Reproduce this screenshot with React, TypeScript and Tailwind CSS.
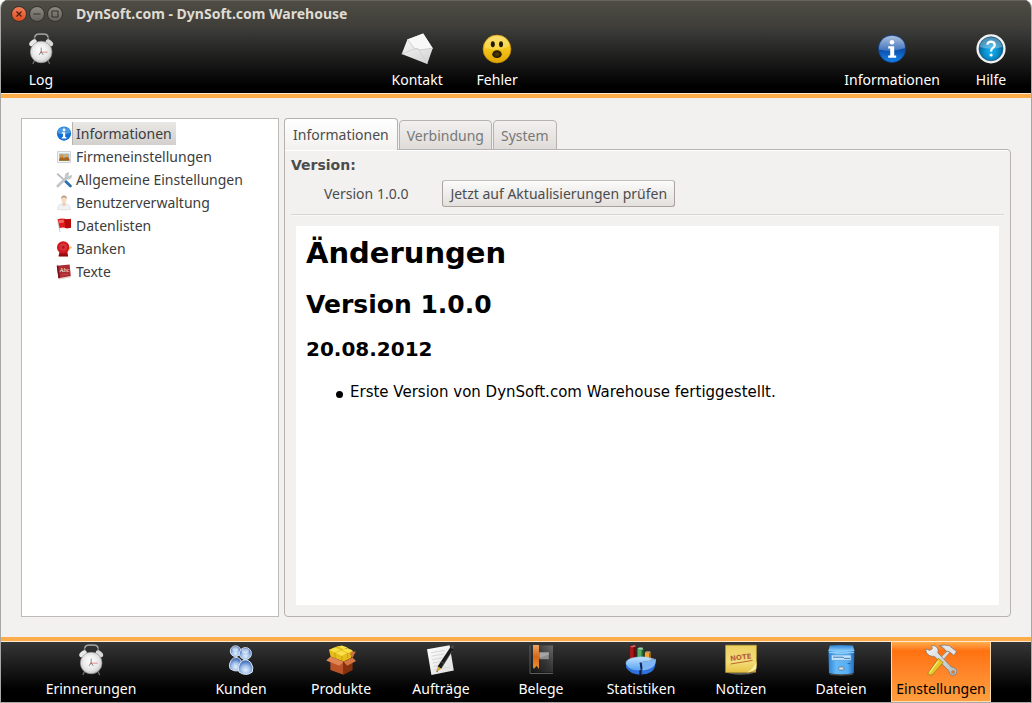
import { useState } from "react";
import type { ReactNode } from "react";

/* ---------- large icons (32 x 32) ---------- */

function Icon32({ children }: { children: ReactNode }) {
  return (
    <svg viewBox="0 0 32 32" className="size-8 shrink-0" aria-hidden="true">
      {children}
    </svg>
  );
}

function ClockIcon() {
  return (
    <Icon32>
      <defs>
        <radialGradient id="clock-face" cx="45%" cy="40%" r="65%">
          <stop offset="0" stopColor="#ffffff" />
          <stop offset="0.7" stopColor="#e4e4e4" />
          <stop offset="1" stopColor="#b4b4b4" />
        </radialGradient>
      </defs>
      <path d="M9.6 7.6V4.2Q9.8 1.4 13 1.2H20Q23 1.4 23.2 4.2V7.6" fill="none" stroke="#7c7c7c" strokeWidth="1.5" />
      <path d="M10 4Q10.4 1.2 13.2 1H19.8Q22.4 1.2 22.8 4" fill="none" stroke="#c6c6c6" strokeWidth="0.7" />
      <path d="M9.5 27.6 7.8 31M23 27.6l1.7 3.4" stroke="#7a7a7a" strokeWidth="1.1" />
      <ellipse cx="8" cy="9.8" rx="4.2" ry="2.7" transform="rotate(-38 8 9.8)" fill="#e9e9e9" />
      <ellipse cx="24.4" cy="9.8" rx="4.2" ry="2.7" transform="rotate(38 24.4 9.8)" fill="#d8d8d8" />
      <circle cx="16.2" cy="19" r="10.8" fill="url(#clock-face)" stroke="#8f8f8f" strokeWidth="0.7" />
      <circle cx="16.2" cy="19" r="9" fill="none" stroke="#d4d4d4" strokeWidth="0.5" />
      <path d="M16.2 20.2V14.6M16.4 19l1.8 2.8M16 19l-1.8 2.8" stroke="#6a6a6a" strokeWidth="0.8" />
      <path d="M15 19.2h7.6" stroke="#d87878" strokeWidth="0.8" />
      <circle cx="16.2" cy="19.2" r="0.8" fill="#b86060" />
    </Icon32>
  );
}

function EnvelopeIcon() {
  return (
    <Icon32>
      <defs>
        <linearGradient id="envelope" x1="0" y1="0" x2="0.4" y2="1">
          <stop offset="0" stopColor="#ffffff" />
          <stop offset="1" stopColor="#d8d8d8" />
        </linearGradient>
      </defs>
      <path d="M6.4 6.4 22.2.6 31.7 15.2 26.2 31 .7 21Z" fill="url(#envelope)" />
      <path d="M6.4 6.4 22.2.6 31.7 15.2 18 16.4Q16 15 13.6 15.6Z" fill="#f8f8f8" />
      <path d="M6.4 6.4 13.6 15.6Q16 14.2 18.4 17L31.7 15.2" fill="none" stroke="#c6c6c6" strokeWidth="0.8" />
      <path d="M.7 21 13.4 16Q16.6 14.6 18.6 18.2L26.2 31" fill="none" stroke="#cecece" strokeWidth="0.8" />
    </Icon32>
  );
}

function SmileyIcon() {
  return (
    <Icon32>
      <defs>
        <linearGradient id="smiley" x1="0" y1="0" x2="0" y2="1">
          <stop offset="0" stopColor="#f9d964" />
          <stop offset="0.45" stopColor="#f6c81c" />
          <stop offset="1" stopColor="#e0a500" />
        </linearGradient>
        <radialGradient id="smiley-mouth">
          <stop offset="0" stopColor="#5e4200" />
          <stop offset="1" stopColor="#1a1200" />
        </radialGradient>
      </defs>
      <circle cx="16" cy="16" r="13.9" fill="url(#smiley)" stroke="#d89a00" strokeWidth="0.7" />
      <path d="M3.6 15Q3.6 3.6 16 3.2 28.4 3.6 28.4 13.4 16 18.4 3.6 15Z" fill="#ffee9a" opacity="0.35" />
      <ellipse cx="11.8" cy="11.2" rx="2" ry="3" fill="#241900" />
      <ellipse cx="20" cy="11.2" rx="2" ry="3" fill="#241900" />
      <ellipse cx="16" cy="21.2" rx="4.7" ry="3.9" fill="url(#smiley-mouth)" />
    </Icon32>
  );
}

function InfoIcon() {
  return (
    <Icon32>
      <defs>
        <linearGradient id="info" x1="0" y1="0" x2="0" y2="1">
          <stop offset="0" stopColor="#2d62ae" />
          <stop offset="0.55" stopColor="#0c4fac" />
          <stop offset="1" stopColor="#1583ee" />
        </linearGradient>
        <linearGradient id="info-shine" x1="0" y1="0" x2="0" y2="1">
          <stop offset="0" stopColor="#ffffff" stopOpacity="0.6" />
          <stop offset="1" stopColor="#ffffff" stopOpacity="0.2" />
        </linearGradient>
      </defs>
      <circle cx="16" cy="15.8" r="13.7" fill="url(#info)" stroke="#123f7e" strokeWidth="0.8" />
      <path d="M3 16.5Q3 4 16 2.8 29 4 29 15 16 20 3 16.5Z" fill="url(#info-shine)" />
      <circle cx="16" cy="9.3" r="2.3" fill="#fff" />
      <path d="M12.2 13.2h6v9.4h2v2.2h-8v-2.2h2v-7.2h-2Z" fill="#fff" />
    </Icon32>
  );
}

function HelpIcon() {
  return (
    <Icon32>
      <defs>
        <radialGradient id="help" cx="50%" cy="60%" r="55%">
          <stop offset="0" stopColor="#14b4f4" />
          <stop offset="0.5" stopColor="#0a92d0" />
          <stop offset="1" stopColor="#03598c" />
        </radialGradient>
      </defs>
      <circle cx="16" cy="15.8" r="14.6" fill="#f2f2f2" />
      <circle cx="16" cy="15.8" r="12" fill="url(#help)" stroke="#0b4f78" strokeWidth="0.6" />
      <path d="M4.6 14Q6 4.6 16 4.2 26 4.6 27.4 14 16 17.6 4.6 14Z" fill="#ffffff" opacity="0.3" />
      <path d="M12.3 11.6Q12.8 8.6 16.2 8.6 19.8 8.8 19.7 12 19.6 14 17.6 15.2 16.1 16.2 16.1 18.4" fill="none" stroke="#fff" strokeWidth="2.2" />
      <circle cx="16.1" cy="22" r="1.6" fill="#fff" />
    </Icon32>
  );
}

function PeopleIcon() {
  return (
    <Icon32>
      <defs>
        <radialGradient id="people" cx="50%" cy="70%" r="60%">
          <stop offset="0" stopColor="#e4effc" />
          <stop offset="0.5" stopColor="#a3c2ec" />
          <stop offset="1" stopColor="#4470b8" />
        </radialGradient>
      </defs>
      <g fill="url(#people)" stroke="#dce8f8" strokeWidth="1">
        <path d="M5 24.6Q3.4 20.4 6 16.4 10.8 10.6 15.8 16 18 21 15.6 26 10 28.4 5 24.6Z" />
        <circle cx="10.6" cy="7.2" r="5.3" />
        <path d="M14 28Q12.2 23 15 19 20.4 12.8 25.8 18.6 29.2 23.4 27.2 28.2 20.6 32.8 14 28Z" />
        <circle cx="20.4" cy="9.6" r="6" />
      </g>
      <ellipse cx="20.2" cy="7" rx="3.8" ry="2.4" fill="#fff" opacity="0.5" />
      <ellipse cx="10.4" cy="5" rx="3.2" ry="2" fill="#fff" opacity="0.5" />
    </Icon32>
  );
}

function BoxIcon() {
  return (
    <Icon32>
      <path d="M5.4 13 18.6 18v12.8L5.4 26Z" fill="#ba5327" />
      <path d="M18.6 18 27.6 14v12L18.6 30.8Z" fill="#85300f" />
      <path d="M5.4 13 14.4 9.4 27.6 14 18.6 18.4Z" fill="#632208" />
      <path d="M4 5.8 13 2 28.4 7.6 26 14 18.6 17.6 5.6 12.6Z" fill="#e5bd1c" />
      <path d="m4.4 6 5.2-2.4 5.8 2.2-5.2 2.6ZM13 2.6l3.8-1.2 5.8 2-4 1.8ZM17.4 6l5-2 5.4 2.4-5 2.6ZM10.8 9l5.4-2.4 5.6 2.4-5 3Z" fill="#f8e04a" />
      <path d="M10 8.6v5.6M16.8 12v4.6M22.6 9v5" stroke="#c69a0c" strokeWidth="0.8" />
      <path d="M5.6 12.6 1.2 16.4 14.4 21.8 18.6 17.8Z" fill="#df8453" />
      <path d="M18.6 17.8 27.6 13.6 31 17 22.2 21.8Z" fill="#d37541" />
      <path d="M27.6 13.8 24.6 9.8 27 7.8 30.8 7.4Z" fill="#c8743f" />
    </Icon32>
  );
}

function DocumentIcon() {
  return (
    <Icon32>
      <defs>
        <linearGradient id="paper" x1="0" y1="0" x2="1" y2="1">
          <stop offset="0" stopColor="#ffffff" />
          <stop offset="1" stopColor="#dedede" />
        </linearGradient>
      </defs>
      <path d="M2 5.2 24.6 1.2 28.8 26.4 6.4 31Z" fill="url(#paper)" />
      <path d="m5.8 8.8 14-2.5M6.4 12.2l13-2.3M7 15.6l10.6-1.8M7.6 19l8-1.4M8.2 22.4l5-.9M8.8 25.8l16-2.8" stroke="#cfcfcf" strokeWidth="0.8" />
      <path d="M25.2 3.4 28.4 5.2 16.2 24.8 12.6 22.6Z" fill="#191919" />
      <path d="M27 1.2Q29 .8 29 3.2L28.4 5.2 25.2 3.4Z" fill="#464646" />
      <path d="M15.8 17.6 19 19.4M27 7 17 23" stroke="#6d6d6d" strokeWidth="0.6" />
      <path d="M12.6 22.6 16.2 24.8 11.4 28.2Z" fill="#d5a83c" />
      <path d="m11.9 26.4-.5 1.8 1.5-1Z" fill="#222" />
    </Icon32>
  );
}

function BookIcon() {
  return (
    <Icon32>
      <defs>
        <linearGradient id="book" x1="1" y1="0" x2="0" y2="1">
          <stop offset="0" stopColor="#6a6a6a" />
          <stop offset="0.45" stopColor="#363636" />
          <stop offset="1" stopColor="#141414" />
        </linearGradient>
        <linearGradient id="ribbon" x1="0" y1="0" x2="0" y2="1">
          <stop offset="0" stopColor="#f0a35f" />
          <stop offset="0.5" stopColor="#d66716" />
          <stop offset="1" stopColor="#f09436" />
        </linearGradient>
      </defs>
      <path d="M5 1.4H28v27H5Z" fill="url(#book)" />
      <path d="M5 29h23v1H5Z" fill="#5c5c5c" />
      <path d="M5 1.4v28" stroke="#6c6c6c" strokeWidth="0.8" />
      <path d="M14.4 8.4h9.4v6.8h-9.4Z" fill="#8d8d8d" />
      <path d="M14.4 8.4h9.4v2.4l-9.4 3Z" fill="#a5a5a5" />
      <path d="M8 1h6v24l-2.4-3.2L8.8 25 8 23Z" fill="url(#ribbon)" />
    </Icon32>
  );
}

function ChartIcon() {
  return (
    <Icon32>
      <defs>
        <linearGradient id="pie-top" x1="0" y1="0" x2="0" y2="1">
          <stop offset="0" stopColor="#c6e3ff" />
          <stop offset="1" stopColor="#56a4f2" />
        </linearGradient>
      </defs>
      <path d="M5 2.4 9.8 1.6V17L5 16Z" fill="#a81717" />
      <path d="m8.6 1.8 2.2 1V17L8.6 17Z" fill="#720707" />
      <path d="M5 2.4 9.6 1 11 2.6 7 3.4Z" fill="#e16161" />
      <path d="M12.4 4.8h4.4V17h-4.4Z" fill="#57aa68" />
      <path d="M16.8 4.8 18.4 6v11h-1.6Z" fill="#236a34" />
      <path d="M12.4 4.8 14 3.4h3.4l1 2.4Z" fill="#a1dbab" />
      <path d="M19.8 8.6h4.6V17h-4.6Z" fill="#f3a62b" />
      <path d="m24.4 8.6 1.4 1.2V17h-1.4Z" fill="#b36b0a" />
      <path d="M19.8 8.6 21 7.4h4l.8 2.4-1.4-1.2Z" fill="#ffd98b" />
      <path d="M1 18.6v5Q5 30.2 14.4 30.8v-5ZM16.2 25.6v5Q28 30.4 30.2 22v-5Z" fill="#2f72dc" />
      <path d="M14.6 18.8 16 25.8Q5 26.8 1 20 .2 14.6 11 13.2 20 11.8 29 15Z" fill="url(#pie-top)" stroke="#8cc2f8" strokeWidth="0.5" />
      <path d="M17 18.6 30.6 15.2Q31.4 24.4 18 26Z" fill="#7cb4f6" stroke="#a5cffc" strokeWidth="0.5" />
      <path d="m15.2 18.6 1 7.2v5.4" fill="none" stroke="#0a2c78" strokeWidth="1.1" />
    </Icon32>
  );
}

function NoteIcon() {
  return (
    <Icon32>
      <defs>
        <linearGradient id="note" x1="0" y1="0" x2="0" y2="1">
          <stop offset="0" stopColor="#ecd164" />
          <stop offset="0.6" stopColor="#f3dd78" />
          <stop offset="1" stopColor="#e6c347" />
        </linearGradient>
      </defs>
      <path d="M2 28.6h28Q25 30.8 15 30.8 6 30.6 2 28.6Z" fill="#5e5e5e" />
      <path d="M.6 1.2H31.4V21.6L24.4 28.4.6 28.4Z" fill="url(#note)" stroke="#c7a02a" strokeWidth="0.6" />
      <path d="M31.4 21.6 24.4 28.4 31 28.4Z" fill="#c7a033" />
      <path d="M31.4 17Q30 23.4 22 28.6 29 27.4 31.4 24.6Z" fill="#fbeea4" />
      <text x="15.8" y="15.6" transform="rotate(-7 16 13)" textAnchor="middle" fontSize="7" fontWeight="700" fontFamily="'DejaVu Sans', sans-serif" fill="#b5603f">NOTE</text>
      <path d="M5.6 20 27.6 16.4" stroke="#b5572f" strokeWidth="0.9" />
    </Icon32>
  );
}

function DriveIcon() {
  return (
    <Icon32>
      <defs>
        <linearGradient id="drive" x1="0" y1="0" x2="1" y2="0">
          <stop offset="0" stopColor="#2b83d8" />
          <stop offset="0.3" stopColor="#66b9f6" />
          <stop offset="0.75" stopColor="#58aef2" />
          <stop offset="1" stopColor="#1b69bc" />
        </linearGradient>
        <linearGradient id="drive-top" x1="0" y1="0" x2="0" y2="1">
          <stop offset="0" stopColor="#2b7fd2" />
          <stop offset="1" stopColor="#9ad8ff" />
        </linearGradient>
      </defs>
      <ellipse cx="16.4" cy="30.2" rx="12" ry="1.5" fill="#4a4a4a" />
      <path d="M3.4 6 4 29.2Q16 31.4 28.8 29.2L29.4 6Z" fill="url(#drive)" />
      <path d="M4.8 1.6Q16 .4 28 1.6L29.4 7Q16 8.6 3.4 7Z" fill="url(#drive-top)" />
      <path d="M4 8.4Q16 10 29 8.4" stroke="#b6e3ff" strokeWidth="0.8" fill="none" />
      <path d="M6.4 11H26v5.4H6.4Z" fill="#c5e5fc" stroke="#4f92d2" strokeWidth="0.6" />
      <path d="M8 13.2h10l1.4 1.2h5.6" stroke="#2c6cac" strokeWidth="0.9" fill="none" />
      <path d="M22.6 19.6h3" stroke="#2566a6" strokeWidth="1" />
      <rect x="13.8" y="23" width="5" height="3" rx="0.6" fill="#e4e4e4" stroke="#4e6e8c" strokeWidth="0.7" />
    </Icon32>
  );
}

function ToolsIcon() {
  return (
    <Icon32>
      <defs>
        <linearGradient id="steel" x1="0" y1="0" x2="1" y2="1">
          <stop offset="0" stopColor="#f8f8f8" />
          <stop offset="1" stopColor="#b0b6b8" />
        </linearGradient>
      </defs>
      <path d="M22.6 6.6 24.6 8.4 17.6 16.6 14.6 14.8Z" fill="#d7dde0" stroke="#7b7b7b" strokeWidth="0.5" />
      <path d="M.8 4.8 4.6 6.4 7.4 4.8 6.6 1.4Q10.8 1.2 12.8 4.4 13.6 6.6 12.8 8.8L26.4 23Q31.6 23.6 32 27.4 31.6 31.4 27.8 31.6 24 31 23.6 26.6L9.6 12.4Q4.4 13 1.6 8.8.8 6.6.8 4.8Z" fill="url(#steel)" stroke="#727272" strokeWidth="0.7" />
      <circle cx="28" cy="28" r="1.6" fill="#ec7c1c" stroke="#858585" strokeWidth="0.5" />
      <path d="M14.4 1.8Q19.4.4 24.2 1.6L27.2 4 31.6 7.6 28.8 11.4 25.6 8.6Q23.2 6.6 21.2 7.2 18.6 3 14.4 1.8Z" fill="#e5e5e5" stroke="#707070" strokeWidth="0.7" />
      <path d="M13.4 14.4 18.2 18.4 7.4 30.8Q4.6 32.2 2.6 29.6Z" fill="#e8c628" stroke="#8e791c" strokeWidth="0.7" />
      <path d="m13.4 16.8-9 12" stroke="#fbea87" strokeWidth="1.1" />
    </Icon32>
  );
}

/* ---------- tree icons (16 x 16) ---------- */

function Icon16({ children }: { children: ReactNode }) {
  return (
    <svg viewBox="0 0 16 16" className="size-4 shrink-0" aria-hidden="true">
      {children}
    </svg>
  );
}

const SmallInfo = () => (
  <Icon16>
    <circle cx="8" cy="7.6" r="7.1" fill="#1371d2" />
    <path d="M1.4 7.2Q2 1.4 8 1 14 1.4 14.6 7 8 9.2 1.4 7.2Z" fill="#5ca5ea" opacity="0.75" />
    <circle cx="8" cy="4" r="1.4" fill="#fff" />
    <path d="M5.8 6.2h3.4v4.9h1.2v1.3H5.8v-1.3H7V7.5H5.8Z" fill="#fff" />
  </Icon16>
);

const SmallFrame = () => (
  <Icon16>
    <path d="M1.5 2.5h13v11h-13Z" fill="#f3f4f6" stroke="#cfd2d8" />
    <path d="M3 4.4h10.4v7.4H3Z" fill="#9dbbd4" />
    <path d="M3 10.4h10.4v1.4H3Z" fill="#6c8c38" />
    <path d="M3.2 11.6Q3.6 8 5.8 7.8 8 8 8.2 11.6ZM7.8 11.6Q8 7.6 10.6 7.6 13 7.6 13.4 11.6Z" fill="#a8621c" />
    <circle cx="5.8" cy="7" r="1.7" fill="#dc9232" />
    <circle cx="10.4" cy="6.6" r="1.9" fill="#e8a640" />
  </Icon16>
);

const SmallTools = () => (
  <Icon16>
    <path d="M1.2 1.6 9.6 9.4" stroke="#b4b8bc" strokeWidth="1.8" />
    <path d="m9.8 9.4 4.6 4.6" stroke="#2e6eb2" strokeWidth="2.8" strokeLinecap="round" />
    <path d="m1.8 14 9.2-8.8" stroke="#c2c6ca" strokeWidth="2.8" strokeLinecap="round" />
    <path d="M9.2 4.4Q9 1 12.8.6L11.8 3l1.6 1.4 2.2-1.2Q16 6.6 12.4 7.2 9.8 7 9.2 4.4Z" fill="#c9cdd0" stroke="#9aa0a4" strokeWidth="0.4" />
  </Icon16>
);

const SmallUser = () => (
  <Icon16>
    <path d="M1.4 14.4Q1.6 9.4 6 8.8h4q4.2.6 4.6 5.6Q8 15.8 1.4 14.4Z" fill="#f0f1f5" stroke="#d8dae2" strokeWidth="0.6" />
    <path d="M6.4 7.4h3.2v2.6L8 11.6 6.4 10Z" fill="#ecceae" />
    <ellipse cx="8" cy="4.6" rx="2.6" ry="3.4" fill="#f5dcc2" />
    <path d="M5.2 4.2Q5 .6 8 .6T10.8 4.2Q9.6 2 8 2.2 6.2 2 5.2 4.2Z" fill="#b49a7c" />
  </Icon16>
);

const SmallFlag = () => (
  <Icon16>
    <path d="M.8 1.2 2 .8 4.6 14H3.4Z" fill="#d4d4d4" />
    <path d="M1.8 1.2Q5.4 0 8.4.8 11.4 1.8 15 .8V9.4Q11.6 10.8 8.6 9.8 6 9.2 3.6 10.2Z" fill="#df1c1c" />
    <path d="M8.4.8Q11.4 1.8 15 .8V9.4Q12 10.6 9.2 10Z" fill="#b80c0c" />
    <path d="M2.6 2.2Q5 1.4 7.6 1.8L8 4.8Q5.6 4.4 3.2 5.2Z" fill="#f16a60" />
  </Icon16>
);

const SmallBell = () => (
  <Icon16>
    <path d="M3.8 9.6h7.4l.8 5.6H2.6Z" fill="#a60d12" />
    <circle cx="7.2" cy="6.4" r="6.2" fill="#cf1a20" />
    <circle cx="7.2" cy="6" r="3.8" fill="#e2575a" opacity="0.45" />
    <circle cx="7.2" cy="6.4" r="1.4" fill="#ae191d" />
    <path d="M12.4 9.6 14.6 6.4" stroke="#e2b356" strokeWidth="1" />
    <circle cx="14.8" cy="6.6" r="1" fill="#edc25b" />
    <path d="M2.8 13.8h9.2v1.6H2.8Z" fill="#8d0a0e" />
  </Icon16>
);

const SmallBook = () => (
  <Icon16>
    <path d="M2.4 14 14.4 12.2 14.8 13.6 3.6 15.4Z" fill="#ded5d0" />
    <path d="M.8 1.8 13.6.4 14.8 12 2.4 14.2Z" fill="#ac2a31" />
    <path d="M.8 1.8 2.2 1.6 3.8 13.9 2.4 14.2Z" fill="#7b0f15" />
    <text x="8.4" y="8.4" textAnchor="middle" fontSize="6" fontFamily="'Liberation Serif', serif" fill="#fff">Abc</text>
    <path d="m5.2 11 7-1" stroke="#cf6a6e" strokeWidth="0.5" />
  </Icon16>
);

/* ---------- data ---------- */

const treeItems = [
  { label: "Informationen", icon: <SmallInfo /> },
  { label: "Firmeneinstellungen", icon: <SmallFrame /> },
  { label: "Allgemeine Einstellungen", icon: <SmallTools /> },
  { label: "Benutzerverwaltung", icon: <SmallUser /> },
  { label: "Datenlisten", icon: <SmallFlag /> },
  { label: "Banken", icon: <SmallBell /> },
  { label: "Texte", icon: <SmallBook /> },
];

const tabs = ["Informationen", "Verbindung", "System"];

const modules = [
  { label: "Erinnerungen", icon: <ClockIcon /> },
  { label: "Kunden", icon: <PeopleIcon /> },
  { label: "Produkte", icon: <BoxIcon /> },
  { label: "Aufträge", icon: <DocumentIcon /> },
  { label: "Belege", icon: <BookIcon /> },
  { label: "Statistiken", icon: <ChartIcon /> },
  { label: "Notizen", icon: <NoteIcon /> },
  { label: "Dateien", icon: <DriveIcon /> },
  { label: "Einstellungen", icon: <ToolsIcon /> },
];

/* ---------- parts ---------- */

function ToolButton({ label, icon }: { label: string; icon: ReactNode }) {
  return (
    <button type="button" className="flex min-w-20 flex-col items-center gap-[5px] px-[11px] pt-[5px] text-white">
      {icon}
      <span className="leading-5">{label}</span>
    </button>
  );
}

function TitleBar() {
  const round = "flex size-4 items-center justify-center rounded-full border border-[#33322d]";
  return (
    <div className="flex h-7 items-center bg-linear-to-b from-[#4f4d46] to-[#3e3d38] pl-[10px] shadow-[inset_0_1px_0_#66645c]">
      <div className="flex gap-[2px]">
        <button type="button" aria-label="Schließen" className={`${round} bg-linear-to-b from-[#f37f59] to-[#dc4a1d]`}>
          <svg viewBox="0 0 8 8" className="size-2"><path d="m1.5 1.5 5 5m0-5-5 5" stroke="#4a1c0c" strokeWidth="1.2" /></svg>
        </button>
        <button type="button" aria-label="Minimieren" className={`${round} bg-linear-to-b from-[#8c8a80] to-[#63615a]`}>
          <svg viewBox="0 0 8 8" className="size-2"><path d="M.5 4h7" stroke="#34332e" strokeWidth="1.2" /></svg>
        </button>
        <button type="button" aria-label="Maximieren" className={`${round} bg-linear-to-b from-[#8c8a80] to-[#63615a]`}>
          <svg viewBox="0 0 8 8" className="size-2"><path d="M1 1h6v6H1Z" fill="none" stroke="#34332e" strokeWidth="1.1" /></svg>
        </button>
      </div>
      <h1 className="ml-[13px] text-[14px] leading-5 font-bold text-[#dfdbd2]">DynSoft.com - DynSoft.com Warehouse</h1>
    </div>
  );
}

function Changelog() {
  return (
    <article className="mx-[5px] mt-[10px] mb-[5px] flex-1 bg-white px-[10px] pt-[7px] font-['DejaVu_Sans',sans-serif] text-black">
      <h2 className="text-[29px] leading-10 font-bold">Änderungen</h2>
      <h3 className="mt-4 text-[25px] leading-8 font-bold">Version 1.0.0</h3>
      <h4 className="mt-[14px] text-[20px] leading-7 font-bold">20.08.2012</h4>
      <ul className="mt-[19px] ml-[30px]">
        <li className="flex items-center gap-[7px] text-[15px] leading-5">
          <span className="mt-1 size-[7px] rounded-full bg-black" />
          Erste Version von DynSoft.com Warehouse fertiggestellt.
        </li>
      </ul>
    </article>
  );
}

export default function App() {
  const [entry, setEntry] = useState("Informationen");
  const [tab, setTab] = useState("Informationen");
  const [module, setModule] = useState("Einstellungen");

  return (
    <div className="flex min-h-screen flex-col overflow-hidden rounded-t-lg border-x border-b border-[#a9a7a3] bg-[#f2f1f0] font-['Noto_Sans',sans-serif] text-[14px] text-[#3c3c3c]">
      <header>
        <TitleBar />
        <div className="flex justify-between border-b border-[#ffe9cc] bg-linear-to-b/srgb from-[#3d3d3c] to-black to-90% pb-[3px]">
          <ToolButton label="Log" icon={<ClockIcon />} />
          <div className="flex">
            <ToolButton label="Kontakt" icon={<EnvelopeIcon />} />
            <ToolButton label="Fehler" icon={<SmileyIcon />} />
          </div>
          <div className="flex">
            <ToolButton label="Informationen" icon={<InfoIcon />} />
            <ToolButton label="Hilfe" icon={<HelpIcon />} />
          </div>
        </div>
        <div className="h-1 bg-[#ffad4c]" />
      </header>

      <main className="flex flex-1 gap-[5px] p-5">
        <nav aria-label="Einstellungen" className="w-1/4 min-w-[258px] border border-[#bdbab7] bg-white pt-[3px]">
          <ul>
            {treeItems.map((item) => (
              <li key={item.label}>
                <button type="button" onClick={() => setEntry(item.label)} className="flex h-[23px] items-center pl-[34px] text-left">
                  {item.icon}
                  <span
                    className={
                      item.label === entry
                        ? "border-l border-[#b5b2af] bg-linear-to-b from-[#eae8e6] to-[#d3cfcc] pr-1 pl-[3px] leading-[23px]"
                        : "pl-1 leading-[23px]"
                    }
                  >
                    {item.label}
                  </span>
                </button>
              </li>
            ))}
          </ul>
        </nav>

        <section className="flex flex-1 flex-col">
          <div role="tablist" className="z-10 -mb-px flex items-end gap-px">
            {tabs.map((name) => (
              <button
                key={name}
                type="button"
                role="tab"
                aria-selected={name === tab}
                onClick={() => setTab(name)}
                className={
                  name === tab
                    ? "h-8 rounded-t-[4px] border border-b-0 border-[#b5b2af] bg-linear-to-b from-white to-[#f2f1f0] px-2 text-[#4c4c4c]"
                    : "h-[30px] rounded-t-[4px] border border-[#b5b2af] bg-linear-to-b from-[#f2f1f0] to-[#dfdbd8] px-[7px] text-[#787878]"
                }
              >
                {name}
              </button>
            ))}
          </div>
          <div role="tabpanel" className="flex flex-1 flex-col rounded-b-[4px] rounded-tr-[4px] border border-[#b5b2af] px-[6px] pt-[5px] pb-[6px] text-[#4c4c4c] shadow-[inset_0_1px_0_#ffffff]">
            <h2 className="font-['DejaVu_Sans',sans-serif] text-[14px] leading-5 font-bold">Version:</h2>
            <div className="flex items-center gap-[34px] pt-[5px] pb-[7px] pl-[33px]">
              <span>Version 1.0.0</span>
              <button type="button" className="h-[27px] rounded-[3px] border border-[#a9a29e] border-t-[#c2bebb] bg-linear-to-b from-[#fbfbfa] to-[#e3e0dd] px-[7px]">
                Jetzt auf Aktualisierungen prüfen
              </button>
            </div>
            <div className="h-[2px] border-t border-[#d8d6d4] bg-[#f8f8f7]" />
            <Changelog />
          </div>
        </section>
      </main>

      <footer>
        <div className="h-1 bg-[#ffad4c]" />
        <nav aria-label="Module" className="grid grid-cols-[2fr_1fr_repeat(8,2fr)] border-t border-[#ffe9cc] bg-linear-to-b/srgb from-[#363636] to-black to-80% px-10">
          {modules.map((item, index) => (
            <button
              key={item.label}
              type="button"
              aria-pressed={item.label === module}
              onClick={() => setModule(item.label)}
              className={[
                "flex h-[60px] flex-col items-center gap-[3px] pt-[2px]",
                index === 1 ? "col-start-3" : "",
                item.label === module
                  ? "border-x border-b border-[#ffd9a8] bg-linear-to-b from-[#ffad4c] via-[#ff710f] via-15% to-[#ff9f3f] text-black"
                  : "text-white",
              ].join(" ")}
            >
              {item.icon}
              <span className="leading-5">{item.label}</span>
            </button>
          ))}
        </nav>
      </footer>
    </div>
  );
}
